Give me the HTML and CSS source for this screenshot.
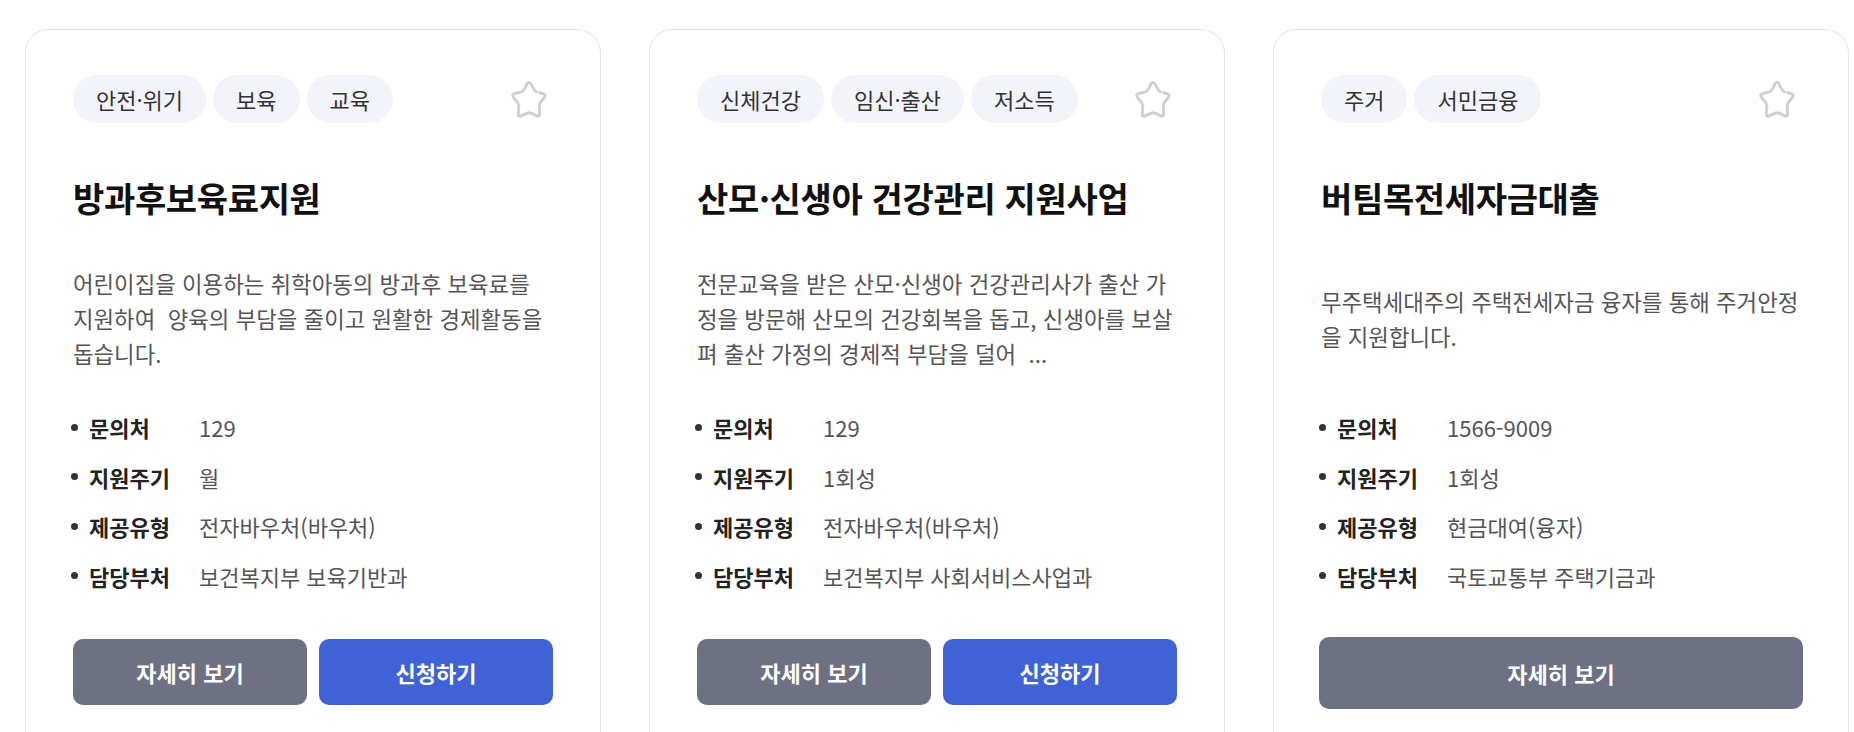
FILE: index.html
```html
<!DOCTYPE html>
<html lang="ko">
<head>
<meta charset="utf-8">
<title>복지서비스</title>
<link rel="stylesheet" href="styles.css">
</head>
<body>
<div class="cards">
  <article class="card">
    <div class="card-head">
      <ul class="tags">
        <li class="tag">안전·위기</li>
        <li class="tag">보육</li>
        <li class="tag">교육</li>
      </ul>
      <button class="fav" type="button" aria-label="관심 등록">
        <svg viewBox="0 0 40 40" width="44" height="48" preserveAspectRatio="none"><path d="M29.6 14.73 L32.76 15.47 Q36.17 16.25 33.87 18.89 L30.67 22.55 Q29.03 24.44 29.25 26.93 L29.68 31.76 Q29.99 35.25 26.77 33.88 L22.3 31.98 Q20 31 17.7 31.98 L13.23 33.88 Q10.01 35.25 10.32 31.76 L10.75 26.93 Q10.97 24.44 9.33 22.55 L6.13 18.89 Q3.83 16.25 7.24 15.47 L11.98 14.37 Q14.42 13.81 15.71 11.66 L18.2 7.5 Q20 4.5 21.8 7.5 L24.29 11.66 Q25.2 13.3 26.6 13.95"/></svg>
      </button>
    </div>
    <h3 class="title">방과후보육료지원</h3>
    <div class="desc"><p>어린이집을 이용하는 취학아동의 방과후 보육료를 지원하여&nbsp; 양육의 부담을 줄이고 원활한 경제활동을 돕습니다.</p></div>
    <ul class="info">
      <li><span class="label">문의처</span><span class="value">129</span></li>
      <li><span class="label">지원주기</span><span class="value">월</span></li>
      <li><span class="label">제공유형</span><span class="value">전자바우처(바우처)</span></li>
      <li><span class="label">담당부처</span><span class="value">보건복지부 보육기반과</span></li>
    </ul>
    <div class="actions">
      <a class="btn btn-detail" href="#">자세히 보기</a>
      <a class="btn btn-apply" href="#">신청하기</a>
    </div>
  </article>

  <article class="card">
    <div class="card-head">
      <ul class="tags">
        <li class="tag">신체건강</li>
        <li class="tag">임신·출산</li>
        <li class="tag">저소득</li>
      </ul>
      <button class="fav" type="button" aria-label="관심 등록">
        <svg viewBox="0 0 40 40" width="44" height="48" preserveAspectRatio="none"><path d="M29.6 14.73 L32.76 15.47 Q36.17 16.25 33.87 18.89 L30.67 22.55 Q29.03 24.44 29.25 26.93 L29.68 31.76 Q29.99 35.25 26.77 33.88 L22.3 31.98 Q20 31 17.7 31.98 L13.23 33.88 Q10.01 35.25 10.32 31.76 L10.75 26.93 Q10.97 24.44 9.33 22.55 L6.13 18.89 Q3.83 16.25 7.24 15.47 L11.98 14.37 Q14.42 13.81 15.71 11.66 L18.2 7.5 Q20 4.5 21.8 7.5 L24.29 11.66 Q25.2 13.3 26.6 13.95"/></svg>
      </button>
    </div>
    <h3 class="title">산모·신생아 건강관리 지원사업</h3>
    <div class="desc"><p>전문교육을 받은 산모·신생아 건강관리사가 출산 가정을 방문해 산모의 건강회복을 돕고, 신생아를 보살펴 출산 가정의 경제적 부담을 덜어&nbsp; ...</p></div>
    <ul class="info">
      <li><span class="label">문의처</span><span class="value">129</span></li>
      <li><span class="label">지원주기</span><span class="value">1회성</span></li>
      <li><span class="label">제공유형</span><span class="value">전자바우처(바우처)</span></li>
      <li><span class="label">담당부처</span><span class="value">보건복지부 사회서비스사업과</span></li>
    </ul>
    <div class="actions">
      <a class="btn btn-detail" href="#">자세히 보기</a>
      <a class="btn btn-apply" href="#">신청하기</a>
    </div>
  </article>

  <article class="card">
    <div class="card-head">
      <ul class="tags">
        <li class="tag">주거</li>
        <li class="tag">서민금융</li>
      </ul>
      <button class="fav" type="button" aria-label="관심 등록">
        <svg viewBox="0 0 40 40" width="44" height="48" preserveAspectRatio="none"><path d="M29.6 14.73 L32.76 15.47 Q36.17 16.25 33.87 18.89 L30.67 22.55 Q29.03 24.44 29.25 26.93 L29.68 31.76 Q29.99 35.25 26.77 33.88 L22.3 31.98 Q20 31 17.7 31.98 L13.23 33.88 Q10.01 35.25 10.32 31.76 L10.75 26.93 Q10.97 24.44 9.33 22.55 L6.13 18.89 Q3.83 16.25 7.24 15.47 L11.98 14.37 Q14.42 13.81 15.71 11.66 L18.2 7.5 Q20 4.5 21.8 7.5 L24.29 11.66 Q25.2 13.3 26.6 13.95"/></svg>
      </button>
    </div>
    <h3 class="title">버팀목전세자금대출</h3>
    <div class="desc"><p>무주택세대주의 주택전세자금 융자를 통해 주거안정을 지원합니다.</p></div>
    <ul class="info">
      <li><span class="label">문의처</span><span class="value">1566-9009</span></li>
      <li><span class="label">지원주기</span><span class="value">1회성</span></li>
      <li><span class="label">제공유형</span><span class="value">현금대여(융자)</span></li>
      <li><span class="label">담당부처</span><span class="value">국토교통부 주택기금과</span></li>
    </ul>
    <div class="actions single">
      <a class="btn btn-detail" href="#">자세히 보기</a>
    </div>
  </article>
</div>
</body>
</html>
```

FILE: styles.css
```css
html, body {
  margin: 0;
  background: #fff;
}

body {
  font-family: "Noto Sans CJK KR", "Noto Sans", sans-serif;
  color: #222;
}

.cards {
  display: flex;
  gap: 48px;
  padding: 29px 0 0 25px;
}

.card {
  box-sizing: border-box;
  flex: 0 0 576px;
  min-height: 760px;
  border: 1px solid #e3e3e6;
  border-radius: 24px;
  padding: 45px 47px 0;
}

.card-head {
  display: flex;
  justify-content: space-between;
  align-items: flex-start;
  height: 48px;
}

.tags {
  display: flex;
  gap: 7px;
  list-style: none;
  margin: 0;
  padding: 0;
}

.tag {
  height: 48px;
  line-height: 48px;
  padding: 0 23px;
  border-radius: 24px;
  background: #f3f3fa;
  color: #333;
  font-size: 22px;
}

.fav {
  width: 44px;
  height: 48px;
  padding: 0;
  border: 0;
  margin-right: 2px;
  background: none;
}

.fav svg {
  display: block;
  fill: none;
  stroke: #cfcfd1;
  stroke-width: 2.6;
  stroke-linecap: round;
  stroke-linejoin: round;
}

.title {
  margin: 52px 0 0;
  font-size: 34px;
  line-height: 45px;
  font-weight: 700;
  color: #111;
  letter-spacing: -0.01em;
}

.desc {
  height: 107px;
  margin-top: 45px;
  display: flex;
  align-items: center;
}

.desc p {
  margin: 0;
  font-size: 22.35px;
  line-height: 35px;
  color: #555;
}

.info {
  list-style: none;
  margin: 40px 0 0;
  padding: 0;
  display: flex;
  flex-direction: column;
  gap: 19.6px;
}

.info li {
  display: flex;
  align-items: center;
  line-height: 30px;
  font-size: 22px;
}

.info li::before {
  content: "";
  width: 7px;
  height: 7px;
  border-radius: 50%;
  background: #333;
  margin: 0 11px 0 -2px;
}

.label {
  width: 110px;
  flex: none;
  font-weight: 700;
  color: #222;
}

.value {
  color: #555;
}

.actions {
  display: flex;
  gap: 12px;
  margin-top: 48px;
}

.btn {
  flex: 1;
  height: 66px;
  display: flex;
  align-items: center;
  justify-content: center;
  border-radius: 10px;
  color: #fff;
  font-size: 22px;
  font-weight: 700;
  text-decoration: none;
}

.btn-detail {
  background: #6e7083;
}

.btn-apply {
  background: #3f62d7;
}

.actions.single .btn {
  height: 72px;
  margin: -2px -2px 0;
}
```
